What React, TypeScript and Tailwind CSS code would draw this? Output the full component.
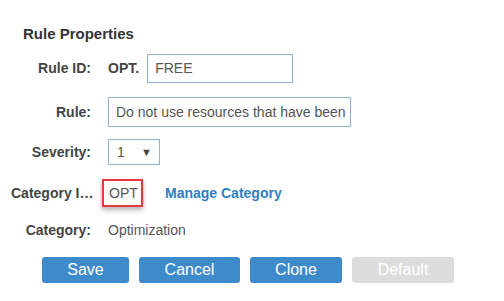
import React from "react";

export default function App() {
  const font = { fontFamily: '"Liberation Sans", Arial, sans-serif' };
  return (
    <div className="w-[504px] h-[301px] bg-white text-[14px] text-[#444]" style={font}>
      <div className="pt-[24px]">
        <div className="pl-[23px] h-[20px] leading-[20px] font-bold text-[15px] text-[#333]">Rule Properties</div>
        <div className="mt-[4px] flex flex-col">
          <div className="flex items-center h-[41px]">
            <div className="w-[80px] ml-[11px] text-right font-bold whitespace-nowrap">Rule ID:</div>
            <div className="ml-[17px] font-bold text-[#444]">OPT.</div>
            <div className="ml-[8px] w-[146px] h-[29px] border border-[#8fb3d8] flex items-center px-[7px] text-[#555]">FREE</div>
          </div>
          <div className="flex items-center h-[46px]">
            <div className="w-[80px] ml-[11px] text-right font-bold whitespace-nowrap">Rule:</div>
            <div className="ml-[17px] w-[243px] h-[30px] border border-[#8fb3d8] flex items-center px-[7px] text-[#555] whitespace-nowrap overflow-hidden">
              Do not use resources that have been
            </div>
          </div>
          <div className="flex items-center h-[34px]">
            <div className="w-[80px] ml-[11px] text-right font-bold whitespace-nowrap">Severity:</div>
            <div className="ml-[17px] w-[52px] h-[26px] border border-[#8fb3d8] flex items-center justify-between pl-[8px] pr-[7px] text-[#555]">
              <span>1</span>
              <span className="text-[11px] text-[#444]">▼</span>
            </div>
          </div>
          <div className="flex items-center h-[48px]">
            <div className="w-[80px] ml-[11px] text-right font-bold whitespace-nowrap">Category I…</div>
            <div className="ml-[11px] w-[41px] h-[28px] border-2 border-[#e8383d] shadow-[0_3px_5px_rgba(0,0,0,0.3)] flex items-center pl-[5px] text-[#555]">OPT</div>
            <div className="ml-[22px] font-bold text-[#2f7ec2]">Manage Category</div>
          </div>
          <div className="flex items-center h-[26px]">
            <div className="w-[80px] ml-[11px] text-right font-bold whitespace-nowrap">Category:</div>
            <div className="ml-[17px] text-[#555]">Optimization</div>
          </div>
        </div>
        <div className="mt-[14px] ml-[42px] flex gap-[10px] text-[16px] text-white">
          <div className="w-[87px] h-[26px] rounded-[3px] bg-[#3d8bcb] flex items-center justify-center">Save</div>
          <div className="w-[101px] h-[26px] rounded-[3px] bg-[#3d8bcb] flex items-center justify-center">Cancel</div>
          <div className="w-[92px] h-[26px] rounded-[3px] bg-[#3d8bcb] flex items-center justify-center">Clone</div>
          <div className="w-[102px] h-[26px] rounded-[3px] bg-[#dddddd] flex items-center justify-center">Default</div>
        </div>
      </div>
    </div>
  );
}
